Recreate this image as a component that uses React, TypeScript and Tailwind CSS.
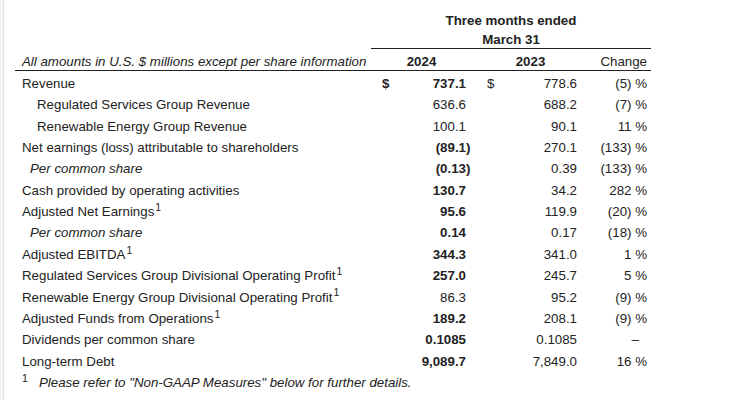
type Row = {
  label: string;
  sup?: boolean;
  indent?: "sub" | "per";
  cur?: boolean;
  v1: string;
  bold?: boolean;
  v2: string;
  ch: string;
};

const rows: Row[] = [
  { label: "Revenue", cur: true, v1: "737.1", bold: true, v2: "778.6", ch: "(5) %" },
  { label: "Regulated Services Group Revenue", indent: "sub", v1: "636.6", v2: "688.2", ch: "(7) %" },
  { label: "Renewable Energy Group Revenue", indent: "sub", v1: "100.1", v2: "90.1", ch: "11 %" },
  { label: "Net earnings (loss) attributable to shareholders", v1: "(89.1)", bold: true, v2: "270.1", ch: "(133) %" },
  { label: "Per common share", indent: "per", v1: "(0.13)", bold: true, v2: "0.39", ch: "(133) %" },
  { label: "Cash provided by operating activities", v1: "130.7", bold: true, v2: "34.2", ch: "282 %" },
  { label: "Adjusted Net Earnings", sup: true, v1: "95.6", bold: true, v2: "119.9", ch: "(20) %" },
  { label: "Per common share", indent: "per", v1: "0.14", bold: true, v2: "0.17", ch: "(18) %" },
  { label: "Adjusted EBITDA", sup: true, v1: "344.3", bold: true, v2: "341.0", ch: "1 %" },
  { label: "Regulated Services Group Divisional Operating Profit", sup: true, v1: "257.0", bold: true, v2: "245.7", ch: "5 %" },
  { label: "Renewable Energy Group Divisional Operating Profit", sup: true, v1: "86.3", v2: "95.2", ch: "(9) %" },
  { label: "Adjusted Funds from Operations", sup: true, v1: "189.2", bold: true, v2: "208.1", ch: "(9) %" },
  { label: "Dividends per common share", v1: "0.1085", bold: true, v2: "0.1085", ch: "—" },
  { label: "Long-term Debt", v1: "9,089.7", bold: true, v2: "7,849.0", ch: "16 %" },
];

// closing paren hangs past the digit edge so numbers stay aligned
function Amount({ value }: { value: string }) {
  if (value.endsWith(")")) {
    return (
      <span>
        {value.slice(0, -1)}
        <span className="inline-block w-0">)</span>
      </span>
    );
  }
  return <span>{value}</span>;
}

function Sup() {
  return <sup className="text-[10.5px] ml-px">1</sup>;
}

export default function App() {
  return (
    <div
      className="flex h-[400px] w-[735px] bg-white text-[13.3px] text-[#222] overflow-hidden"
      style={{ fontFamily: '"Liberation Sans", Arial, sans-serif' }}
    >
      <div className="w-[4px] shrink-0 bg-[#f4f4f4] border-r border-[#e4e4e4]" />
      <div className="ml-[11px] w-[636px] pt-[11px]">
        <div className="grid grid-cols-[356px_280px]">
          <div />
          <div className="border-b border-[#222]">
            <div className="h-[20px] flex items-center justify-center font-bold">Three months ended</div>
            <div className="h-[17px] flex items-center justify-center font-bold">March 31</div>
          </div>
        </div>

        <div className="grid grid-cols-[356px_101px_111px_68px] h-[22px] items-end border-b border-[#222] leading-[15px] pb-px">
          <div className="pl-[7px] italic">All amounts in U.S. $ millions except per share information</div>
          <div className="text-center font-bold">2024</div>
          <div className="text-center font-bold pl-[6px]">2023</div>
          <div className="text-right pr-[4px]">Change</div>
        </div>

        <div className="pt-[2px]">
          {rows.map((r, i) => (
            <div
              key={i}
              className="grid grid-cols-[356px_28px_73px_27px_84px_68px] h-[21.4px] items-center whitespace-nowrap"
            >
              <div
                className={
                  r.indent === "sub"
                    ? "pl-[22px]"
                    : r.indent === "per"
                    ? "pl-[15px] italic"
                    : "pl-[7px]"
                }
              >
                {r.label}
                {r.sup && <Sup />}
              </div>
              <div className="pl-[11px] font-bold">{r.cur ? "$" : ""}</div>
              <div className={r.bold ? "text-right pr-[6px] font-bold" : "text-right pr-[6px]"}>
                <Amount value={r.v1} />
              </div>
              <div className="pl-[15px]">{r.cur ? "$" : ""}</div>
              <div className="text-right pr-[6px]">{r.v2}</div>
              <div className={r.ch === "—" ? "text-right pr-[12px]" : "text-right pr-[4px]"}>
                {r.ch === "—" ? "–" : r.ch}
              </div>
            </div>
          ))}
          <div className="h-[21.4px] flex items-center pl-[7px] whitespace-nowrap">
            <sup className="text-[10.5px] w-[17px]">1</sup>
            <span className="italic">Please refer to &quot;Non-GAAP Measures&quot; below for further details.</span>
          </div>
        </div>
      </div>
    </div>
  );
}
